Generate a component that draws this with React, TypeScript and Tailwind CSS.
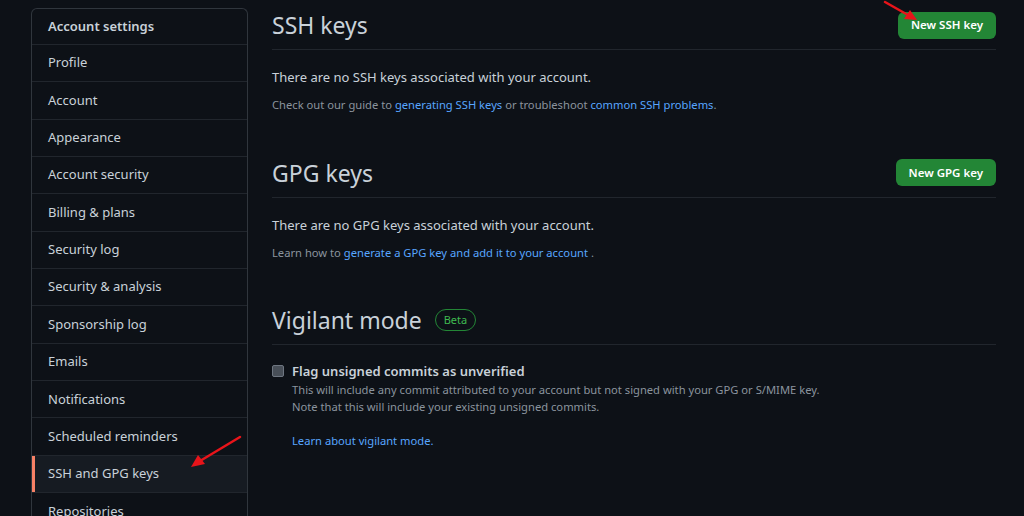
import React from 'react'

const navItems = [
  'Profile',
  'Account',
  'Appearance',
  'Account security',
  'Billing & plans',
  'Security log',
  'Security & analysis',
  'Sponsorship log',
  'Emails',
  'Notifications',
  'Scheduled reminders',
  'SSH and GPG keys',
  'Repositories',
]

const font = { fontFamily: '"Noto Sans", "Open Sans", sans-serif' }

function GreenButton({ label }: { label: string }) {
  return (
    <button className="h-[27px] rounded-md bg-[#238636] px-[13px] text-[11.5px] font-semibold text-white">
      {label}
    </button>
  )
}

function SectionHead({ title, children }: { title: string; children?: React.ReactNode }) {
  return (
    <div className="flex h-[50px] items-center justify-between border-b border-[#21262d]">
      <h2 className="pt-[2px] text-[23px] font-normal leading-none text-[#c9d1d9]">{title}</h2>
      {children}
    </div>
  )
}

export default function App() {
  return (
    <div className="relative h-[516px] w-[1024px] overflow-hidden bg-[#0d1117]" style={font}>
      <div className="flex pl-[31px] pr-[28px]">
        {/* sidebar */}
        <nav className="mt-[8px] w-[217px] shrink-0 rounded-t-md border border-b-0 border-[#30363d]">
          <div className="flex h-[35px] items-center px-4 text-[13px] font-semibold text-[#c9d1d9]">
            Account settings
          </div>
          {navItems.map((item) => {
            const active = item === 'SSH and GPG keys'
            return (
              <div
                key={item}
                className={
                  active
                    ? 'relative flex h-[37.35px] items-center border-t border-[#21262d] bg-[#161b22] px-4 text-[13px] text-[#c9d1d9]'
                    : 'flex h-[37.35px] items-center border-t border-[#21262d] px-4 text-[13px] text-[#c9d1d9]'
                }
              >
                {active && <span className="absolute left-0 top-0 h-full w-[3px] bg-[#f78166]" />}
                {item}
              </div>
            )
          })}
        </nav>

        {/* main */}
        <main className="ml-[24px] flex-1">
          <SectionHead title="SSH keys">
            <div className="pt-[1px]">
              <GreenButton label="New SSH key" />
            </div>
          </SectionHead>
          <p className="mt-[17px] text-[13px] leading-[20px] text-[#c9d1d9]">
            There are no SSH keys associated with your account.
          </p>
          <p className="mt-[9px] text-[11.2px] leading-[18px] text-[#8b949e]">
            Check out our guide to <a className="text-[#58a6ff]">generating SSH keys</a> or troubleshoot{' '}
            <a className="text-[#58a6ff]">common SSH problems</a>.
          </p>

          <div className="mt-[34px]">
            <SectionHead title="GPG keys">
              <GreenButton label="New GPG key" />
            </SectionHead>
          </div>
          <p className="mt-[17px] text-[13px] leading-[20px] text-[#c9d1d9]">
            There are no GPG keys associated with your account.
          </p>
          <p className="mt-[9px] text-[11.2px] leading-[18px] text-[#8b949e]">
            Learn how to <a className="text-[#58a6ff]">generate a GPG key and add it to your account</a> .
          </p>

          <div className="mt-[33px]">
            <div className="flex h-[50px] items-center border-b border-[#21262d]">
              <h2 className="pt-[2px] text-[23px] font-normal leading-none text-[#c9d1d9]">Vigilant mode</h2>
              <span className="ml-[13px] rounded-full border border-[#238636] px-[8px] text-[11px] leading-[20px] text-[#3fb950]">
                Beta
              </span>
            </div>
          </div>

          <div className="mt-[16px] flex">
            <span className="mt-[4px] h-[12px] w-[12px] shrink-0 rounded-[2px] border border-[#6e7681] bg-[#484f58]" />
            <div className="ml-[8px]">
              <div className="text-[13px] font-semibold leading-[20px] text-[#c9d1d9]">
                Flag unsigned commits as unverified
              </div>
              <p className="text-[11.2px] leading-[17px] text-[#8b949e]">
                This will include any commit attributed to your account but not signed with your GPG or S/MIME key.
              </p>
              <p className="text-[11.2px] leading-[17px] text-[#8b949e]">
                Note that this will include your existing unsigned commits.
              </p>
              <p className="mt-[17px] text-[11.2px] leading-[17px] text-[#58a6ff]">Learn about vigilant mode.</p>
            </div>
          </div>
        </main>
      </div>

      {/* annotation arrows */}
      <svg className="pointer-events-none absolute left-0 top-0" width="1024" height="516">
        <line x1="240" y1="437" x2="200" y2="461" stroke="#e8141a" strokeWidth="2.5" strokeLinecap="round" />
        <polygon points="191,467 198,455 205,464" fill="#e8141a" />
        <line x1="885" y1="2" x2="908" y2="15" stroke="#e8141a" strokeWidth="2.5" strokeLinecap="round" />
        <polygon points="917,20 904,19 910,10" fill="#e8141a" />
      </svg>
    </div>
  )
}
